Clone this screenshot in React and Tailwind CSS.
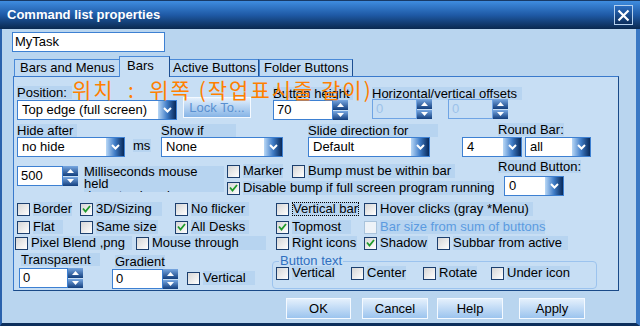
import React from 'react';

const strip = "bg-[#b7d4f0] h-[13px] leading-[13px] whitespace-nowrap";

function Chevron() {
  return (
    <svg width="9" height="6" viewBox="0 0 9 6">
      <path d="M1 1 L4.5 4.5 L8 1" stroke="white" strokeWidth="2" fill="none" />
    </svg>
  );
}

function Combo({ value, className }) {
  return (
    <div className={"flex h-[20px] border border-[#3d80d2] bg-white " + className}>
      <span className="flex-1 overflow-hidden whitespace-nowrap pl-[4px] leading-[18px]">{value}</span>
      <span className="flex w-[18px] items-center justify-center bg-gradient-to-r from-[#b9d8f6] via-[#3f7cc6] to-[#08295a]">
        <Chevron />
      </span>
    </div>
  );
}

function Spin({ value, className, disabled }) {
  return (
    <div className={"flex h-[20px] " + className}>
      <div className={disabled
        ? "flex-1 border border-[#6fa4e4] pl-[3px] leading-[18px] text-[#9cc2ea]"
        : "flex-1 border border-[#3d80d2] bg-white pl-[3px] leading-[18px]"}>{value}</div>
      <div className="flex w-[15px] flex-col gap-px">
        <span className="flex flex-1 items-center justify-center bg-gradient-to-b from-[#78a8e2] to-[#123f7e]">
          <svg width="7" height="4" viewBox="0 0 7 4"><path d="M0 4 L3.5 0 L7 4Z" fill="white" /></svg>
        </span>
        <span className="flex flex-1 items-center justify-center bg-gradient-to-b from-[#78a8e2] to-[#123f7e]">
          <svg width="7" height="4" viewBox="0 0 7 4"><path d="M0 0 L3.5 4 L7 0Z" fill="white" /></svg>
        </span>
      </div>
    </div>
  );
}

function Check({ label, checked, disabled, className, lw, focus }) {
  return (
    <div className={"flex h-[14px] shrink-0 items-center " + className}>
      <span className={disabled
        ? "flex h-[13px] w-[13px] shrink-0 items-center justify-center border border-[#aac4dc] bg-[#eef3f8]"
        : "flex h-[13px] w-[13px] shrink-0 items-center justify-center border border-[#1c3f6e] bg-gradient-to-br from-[#d6d6d6] to-white"}>
        {checked && (
          <svg width="9" height="8" viewBox="0 0 9 8">
            <path d="M1 3.5 L3.5 6.5 L8 1" stroke="#1f9a2a" strokeWidth="1.8" fill="none" />
          </svg>
        )}
      </span>
      <span className={(focus ? "border border-dotted border-black leading-[12px] " : "leading-[14px] ") +
        (disabled ? "text-[#5b9be0] " : "") +
        "ml-[3px] h-[14px] whitespace-nowrap bg-[#b7d4f0] " + lw}>{label}</span>
    </div>
  );
}

function Btn({ children, className }) {
  return (
    <div className={"flex h-[21px] items-center justify-center border border-[#f4f9ff] bg-gradient-to-b from-[#e4f0fc] to-[#9cc4ee] " + className}>
      {children}
    </div>
  );
}

export default function App() {
  return (
    <div className="relative flex h-[326px] w-[640px] flex-col overflow-hidden bg-[#b9d5ef] font-['Liberation_Sans',Arial,sans-serif] text-[13px] text-black">
      {/* title bar */}
      <div className="flex h-[29px] shrink-0 items-center justify-between border-t border-[#183a66] bg-gradient-to-b from-[#3f8de0] via-[#1f5aa6] to-[#0a2950] pl-[7px] pr-[7px]">
        <span className="text-[13px] font-bold text-white">Command list properties</span>
        <div className="flex h-[20px] w-[19px] items-center justify-center border border-[#b4d0ee] bg-gradient-to-b from-[#2a6cc0] to-[#0c2f5e]">
          <svg width="13" height="13" viewBox="0 0 13 13">
            <path d="M1.5 1.5 L11.5 11.5 M11.5 1.5 L1.5 11.5" stroke="white" strokeWidth="2.2" />
          </svg>
        </div>
      </div>

      <div className="flex flex-1 flex-col border-b-[3px] border-l-[2px] border-r-[4px] border-b-[#0d2f5c] border-l-[#2a62ad] border-r-[#3a78c4]">
        <div className="ml-[10px] mt-[3px] h-[20px] w-[153px] border border-[#3d80d2] bg-white pl-[2px] leading-[18px]">MyTask</div>

        {/* tabs */}
        <div className="ml-[12px] mt-[4px] flex h-[20px] items-end">
          <div className="h-[17px] w-[105px] border-l border-t border-[#4a8ad8] bg-[#c0daf3] pl-[5px] leading-[16px]">Bars and Menus</div>
          <div className="relative z-10 -mb-px h-[21px] w-[51px] border-l border-r border-t border-l-[#4a8ad8] border-r-[#1d4f92] border-t-[#4a8ad8] bg-[#c7def4] pl-[7px] leading-[17px]">Bars</div>
          <div className="h-[17px] w-[89px] border-r border-t border-r-[#1d4f92] border-t-[#4a8ad8] bg-[#c0daf3] pl-[3px] leading-[16px]">Active Buttons</div>
          <div className="h-[17px] w-[94px] border-l border-r border-t border-l-[#4a8ad8] border-r-[#1d4f92] border-t-[#4a8ad8] bg-[#c0daf3] pl-[4px] leading-[16px]">Folder Buttons</div>
        </div>

        {/* panel */}
        <div className="ml-[11px] flex h-[215px] w-[606px] flex-col border border-l-[#3a7acc] border-t-[#3a7acc] border-r-[#1a4a88] border-b-[#1a4a88] bg-[#c7def4]">
          {/* band A */}
          <div className="flex h-[44px] items-start">
            <div className="ml-[3px] flex w-[160px] flex-col">
              <span className={"mt-[9px] w-[55px] " + strip}>Position:</span>
              <Combo value="Top edge (full screen)" className="mt-[1px] w-[160px]" />
            </div>
            <Btn className="ml-[6px] mt-[20px] w-[68px] border-[#8ab8ea] from-[#e0eefb] to-[#86b4e6] text-[#5a90d0]">Lock To...</Btn>
            <div className="ml-[22px] flex w-[75px] flex-col">
              <span className={"mt-[10px] w-[80px] " + strip}>Button height</span>
              <Spin value="70" className="w-[75px]" />
            </div>
            <div className="ml-[24px] flex w-[146px] flex-col">
              <span className={"mt-[10px] w-[150px] " + strip}>Horizontal/vertical offsets</span>
              <div className="-mt-px flex gap-[16px]">
                <Spin value="0" className="w-[60px]" disabled />
                <Spin value="0" className="w-[60px]" disabled />
              </div>
            </div>
          </div>

          {/* band B */}
          <div className="flex h-[38px] items-start">
            <div className="ml-[3px] flex w-[108px] flex-col">
              <span className={"mt-[3px] w-[60px] " + strip}>Hide after</span>
              <Combo value="no hide" className="w-[108px]" />
            </div>
            <span className={"ml-[8px] mt-[18px] w-[18px] " + strip}>ms</span>
            <div className="ml-[10px] flex w-[122px] flex-col">
              <span className={"mt-[3px] w-[75px] " + strip}>Show if</span>
              <Combo value="None" className="w-[122px]" />
            </div>
            <div className="ml-[25px] flex w-[122px] flex-col">
              <span className={"mt-[3px] w-[130px] " + strip}>Slide direction for</span>
              <Combo value="Default" className="w-[122px]" />
            </div>
            <div className="ml-[32px] flex w-[129px] flex-col">
              <span className={"ml-[36px] mt-[2px] min-w-[65px] self-start " + strip}>Round Bar:</span>
              <div className="mt-[1px] flex gap-[3px]">
                <Combo value="4" className="w-[60px]" />
                <Combo value="all" className="w-[66px]" />
              </div>
            </div>
          </div>

          {/* band C */}
          <div className="flex h-[38px] items-start">
            <Spin value="500" className="ml-[3px] mt-[7px] w-[61px]" />
            <div className="ml-[6px] mt-[7px] h-[26px] w-[140px] overflow-hidden bg-[#b7d4f0] leading-[12px]">
              Milliseconds mouse<br />held<br />down to show bar
            </div>
            <div className="ml-[3px] flex w-[271px] flex-col">
              <div className="mt-[5px] flex">
                <Check label="Marker" className="w-[65px]" lw="min-w-[40px]" />
                <Check label="Bump must be within bar" lw="min-w-[147px]" />
              </div>
              <Check label="Disable bump if full screen program running" checked className="mt-[3px]" lw="min-w-[245px]" />
            </div>
            <div className="flex flex-col">
              <span className={"mt-px min-w-[82px] " + strip}>Round Button:</span>
              <Combo value="0" className="ml-[6px] mt-[3px] w-[60px]" />
            </div>
          </div>

          {/* band D */}
          <div className="flex h-[56px] flex-col">
            <div className="ml-[3px] mt-[5px] flex">
              <Check label="Border" className="w-[63px]" lw="min-w-[37px]" />
              <Check label="3D/Sizing" checked className="w-[95px]" lw="min-w-[66px]" />
              <Check label="No flicker" className="w-[101px]" lw="min-w-[58px]" />
              <Check label="Vertical bar" focus className="w-[88px]" lw="min-w-[65px]" />
              <Check label="Hover clicks (gray *Menu)" lw="min-w-[153px]" />
            </div>
            <div className="ml-[3px] mt-[4px] flex">
              <Check label="Flat" className="w-[63px]" lw="min-w-[30px]" />
              <Check label="Same size" className="w-[95px]" lw="min-w-[62px]" />
              <Check label="All Desks" checked className="w-[101px]" lw="min-w-[58px]" />
              <Check label="Topmost" checked className="w-[88px]" lw="min-w-[59px]" />
              <Check label="Bar size from sum of buttons" disabled lw="min-w-[163px]" />
            </div>
            <div className="ml-[1px] mt-[2px] flex">
              <Check label="Pixel Blend ,png" className="w-[121px]" lw="min-w-[101px]" />
              <Check label="Mouse through" className="w-[140px]" lw="min-w-[114px]" />
              <Check label="Right icons" className="w-[88px]" lw="min-w-[65px]" />
              <Check label="Shadow" checked className="w-[73px]" lw="min-w-[48px]" />
              <Check label="Subbar from active" lw="min-w-[115px]" />
            </div>
          </div>

          {/* band E */}
          <div className="flex h-[37px] items-start">
            <div className="ml-[5px] flex w-[64px] flex-col">
              <span className={"ml-[2px] w-[79px] " + strip}>Transparent</span>
              <Spin value="0" className="mt-[2px] w-[64px]" />
            </div>
            <div className="ml-[29px] flex w-[66px] flex-col">
              <span className={"ml-[3px] mt-[2px] min-w-[48px] self-start " + strip}>Gradient</span>
              <Spin value="0" className="mt-px w-[66px]" />
            </div>
            <Check label="Vertical" className="ml-[9px] mt-[18px]" lw="min-w-[52px]" />
            <fieldset className="ml-[17px] mt-[2px] h-[34px] w-[325px] rounded-[4px] border border-[#9cc3ee]">
              <legend className="ml-[6px] px-[1px] leading-[12px] text-[#2f6fc0]">Button text</legend>
              <div className="ml-[3px] mt-[-1px] flex">
                <Check label="Vertical" className="w-[75px]" lw="min-w-[42px]" />
                <Check label="Center" className="w-[72px]" lw="min-w-[37px]" />
                <Check label="Rotate" className="w-[68px]" lw="min-w-[34px]" />
                <Check label="Under icon" lw="min-w-[61px]" />
              </div>
            </fieldset>
          </div>
        </div>

        {/* buttons */}
        <div className="ml-[284px] mt-[7px] flex">
          <Btn className="w-[65px]">OK</Btn>
          <Btn className="ml-[11px] w-[66px]">Cancel</Btn>
          <Btn className="ml-[9px] w-[66px]">Help</Btn>
          <Btn className="ml-[16px] w-[66px]">Apply</Btn>
        </div>
      </div>

      {/* orange annotation over the dialog */}
      <span className="absolute left-[72px] top-[77px] whitespace-pre font-['Noto_Sans_CJK_KR',sans-serif] text-[21px] leading-[25px] tracking-[2px] text-[#ff8000]">
        위치  :  위쪽 (작업표시줄 같이)
      </span>
    </div>
  );
}
